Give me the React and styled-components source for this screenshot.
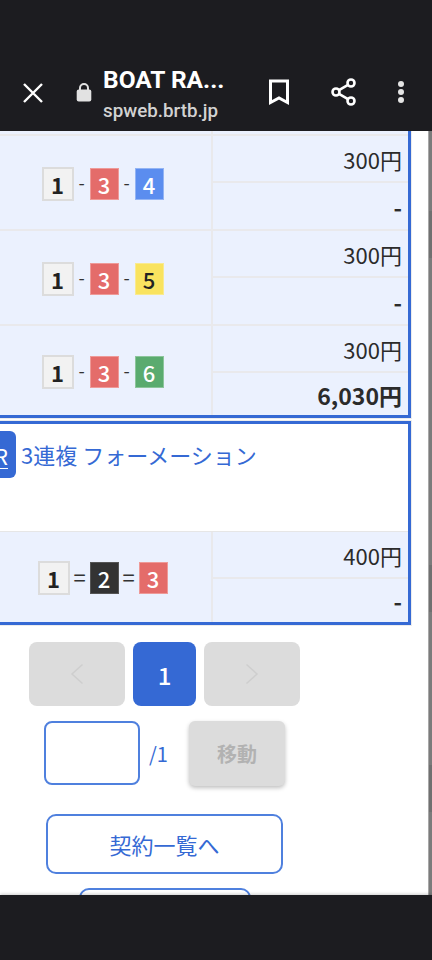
import React from 'react';
import styled, { createGlobalStyle } from 'styled-components';

const GlobalStyle = createGlobalStyle`
  html, body {
    margin: 0;
    padding: 0;
    background: #1c1c20;
  }
  * {
    box-sizing: border-box;
  }
`;

const boatColors = {
  1: { bg: '#f2f2f2', fg: '#222222', line: '#dcdcdc' },
  2: { bg: '#333333', fg: '#ffffff', line: '#555555' },
  3: { bg: '#e46c6a', fg: '#ffffff', line: '#ee9a98' },
  4: { bg: '#5b8def', fg: '#ffffff', line: '#93b4f4' },
  5: { bg: '#f9e35f', fg: '#222222', line: '#f9ea90' },
  6: { bg: '#5aab6f', fg: '#ffffff', line: '#8cc59b' },
};

const firstCard = [
  { boats: [1, 3, 4], sep: '-', stake: '300円', payout: '-', height: 95 },
  { boats: [1, 3, 5], sep: '-', stake: '300円', payout: '-', height: 95 },
  { boats: [1, 3, 6], sep: '-', stake: '300円', payout: '6,030円', height: 89 },
];

const Close = () => (
  <svg width="20" height="20" viewBox="0 0 20 20" stroke="#fff" strokeWidth="2.400">
    <path d="M1 1l18 18M19 1L1 19" />
  </svg>
);

const Bookmark = () => (
  <svg width="24" height="28" viewBox="0 0 24 28" fill="none" stroke="#fff" strokeWidth="3">
    <path d="M3.500 3h17v21.500L12 20l-8.500 4.500z" strokeLinejoin="miter" />
  </svg>
);

const Share = () => (
  <svg width="28" height="30" viewBox="0 0 28 30" fill="none" stroke="#fff" strokeWidth="2.600">
    <circle cx="21" cy="6" r="3.500" />
    <circle cx="6" cy="15" r="3.500" />
    <circle cx="21" cy="24" r="3.500" />
    <path d="M9 13.200l9-5.400M9 16.800l9 5.400" />
  </svg>
);

const Kebab = () => (
  <svg width="8" height="24" viewBox="0 0 8 24" fill="#e4e4e4">
    <circle cx="4" cy="4" r="3" />
    <circle cx="4" cy="12" r="3" />
    <circle cx="4" cy="20" r="3" />
  </svg>
);

const Lock = () => (
  <svg width="16" height="20" viewBox="0 0 16 20" fill="none">
    <path d="M4 9V6a4 4 0 0 1 8 0v3" stroke="#e2e2e2" strokeWidth="2" />
    <rect x="0.700" y="7.500" width="14.600" height="12" rx="2" fill="#e2e2e2" />
  </svg>
);

const Chevron = ({ dir }) => (
  <svg width="14" height="22" viewBox="0 0 14 22" fill="none" stroke="#cecece" strokeWidth="1.500">
    <path d={dir === 'left' ? 'M12.500 1.500L2 11l10.500 9.500' : 'M1.500 1.500L12 11 1.500 20.500'} />
  </svg>
);

const Boats = ({ boats, sep }) => (
  <BoatRow>
    {boats.map((n, i) => (
      <React.Fragment key={n}>
        {i > 0 && <Sep $wide={sep === '='}>{sep}</Sep>}
        <Boat $n={n}>{n}</Boat>
      </React.Fragment>
    ))}
  </BoatRow>
);

const BetRow = ({ boats, sep, stake, payout, height }) => (
  <Row $height={height}>
    <BoatCell>
      <Boats boats={boats} sep={sep} />
    </BoatCell>
    <AmountCol>
      <Stake>{stake}</Stake>
      <Payout>{payout}</Payout>
    </AmountCol>
  </Row>
);

const App = () => {
  return (
    <Page>
      <GlobalStyle />
      <TopBar>
        <CloseBtn>
          <Close />
        </CloseBtn>
        <LockWrap>
          <Lock />
        </LockWrap>
        <TitleBox>
          <SiteTitle>BOAT RA...</SiteTitle>
          <SiteUrl>spweb.brtb.jp</SiteUrl>
        </TitleBox>
        <TopIcons>
          <Bookmark />
          <Share />
          <Kebab />
        </TopIcons>
      </TopBar>
      <Viewport>
        <Main>
          <Card>
            <CutRow>
              <CutCell />
              <CutCell $right />
            </CutRow>
            {firstCard.map((row) => (
              <BetRow key={row.boats.join('')} {...row} />
            ))}
          </Card>
          <Card $second>
            <CardHead>
              <RBadge>
                <span>R</span>
              </RBadge>
              <BetName>3連複 フォーメーション</BetName>
            </CardHead>
            <BetRow boats={[1, 2, 3]} sep="=" stake="400円" payout="-" height={90} />
          </Card>
          <Controls>
            <Pager>
              <PageBtn $wide>
                <Chevron dir="left" />
              </PageBtn>
              <PageBtn $active>1</PageBtn>
              <PageBtn $wide>
                <Chevron dir="right" />
              </PageBtn>
            </Pager>
            <JumpRow>
              <JumpInput type="text" />
              <Total>/1</Total>
              <MoveBtn>移動</MoveBtn>
            </JumpRow>
            <LinkBtn>契約一覧へ</LinkBtn>
            <BackBtn />
          </Controls>
        </Main>
        <Rail />
      </Viewport>
      <BottomBar />
    </Page>
  );
};

const Page = styled.div`
  width: 432px;
  height: 960px;
  overflow: hidden;
  display: flex;
  flex-direction: column;
  font-family: 'Noto Sans CJK JP', 'Noto Sans', sans-serif;
  color: #222222;
`;

const TopBar = styled.header`
  height: 131px;
  flex: none;
  background: #1c1c20;
  display: flex;
  align-items: flex-start;
  padding-top: 66px;
`;

const CloseBtn = styled.div`
  width: 20px;
  height: 20px;
  margin: 17px 0 0 23px;
  line-height: 0;
`;

const LockWrap = styled.div`
  margin: 16px 0 0 33px;
  line-height: 0;
`;

const TitleBox = styled.div`
  margin: -1px 0 0 11px;
  width: 150px;
  font-family: Roboto, 'Noto Sans', sans-serif;
`;

const SiteTitle = styled.div`
  font-size: 24.500px;
  line-height: 30px;
  font-weight: 700;
  color: #ffffff;
  white-space: nowrap;
`;

const SiteUrl = styled.div`
  font-size: 18.800px;
  line-height: 24px;
  margin-top: 4px;
  font-weight: 500;
  color: #d2d2d2;
  white-space: nowrap;
`;

const TopIcons = styled.div`
  display: flex;
  align-items: center;
  height: 30px;
  margin: 11px 0 0 14px;
  gap: 39px;
`;

const Viewport = styled.div`
  flex: 1;
  min-height: 0;
  display: flex;
`;

const Main = styled.main`
  width: 428px;
  background: #ffffff;
  overflow: hidden;
`;

const Rail = styled.div`
  width: 4px;
  border-left: 1px solid #a8a8a8;
  background: linear-gradient(
    to bottom,
    #7b7b7b 0 80px,
    #707070 80px 127px,
    #7b7b7b 127px 434px,
    #707070 434px 481px,
    #7b7b7b 481px 634px,
    #707070 634px 681px,
    #7b7b7b 681px
  );
`;

const Card = styled.section`
  width: 414px;
  margin-left: -3px;
  margin-top: ${(p) => (p.$second ? '3px' : '0')};
  border: 3px solid #3569d4;
  border-top-width: ${(p) => (p.$second ? '3px' : '0')};
  box-shadow: 0 0 0 1px #ececec;
  background: #ebf1fe;
`;

const CutRow = styled.div`
  height: 5px;
  display: flex;
  border-bottom: 2px solid #e9e9ec;
`;

const CutCell = styled.div`
  width: ${(p) => (p.$right ? 'auto' : '211px')};
  flex: ${(p) => (p.$right ? '1' : 'none')};
  border-left: ${(p) => (p.$right ? '2px solid #e9e9ec' : 'none')};
`;

const Row = styled.div`
  height: ${(p) => p.$height}px;
  display: flex;
  border-bottom: 2px solid #e9e9ec;

  &:last-child {
    border-bottom: 0;
  }
`;

const BoatCell = styled.div`
  width: 211px;
  flex: none;
  padding: 2px 6px 0 0;
  display: flex;
  align-items: center;
  justify-content: center;
`;

const BoatRow = styled.div`
  display: flex;
  align-items: center;
`;

const Boat = styled.span`
  display: flex;
  align-items: center;
  justify-content: center;
  width: ${(p) => (p.$n === 1 ? '32px' : '29px')};
  height: ${(p) => (p.$n === 1 ? '34px' : '32px')};
  background: ${(p) => boatColors[p.$n].bg};
  color: ${(p) => boatColors[p.$n].fg};
  border: ${(p) => (p.$n === 1 ? '2px' : '1px')} solid ${(p) => boatColors[p.$n].line};
  font-size: 22px;
  font-weight: ${(p) => (p.$n === 1 ? 700 : 500)};
  line-height: 1;
`;

const Sep = styled.span`
  width: ${(p) => (p.$wide ? '20px' : '16px')};
  text-align: center;
  font-size: ${(p) => (p.$wide ? '22px' : '18px')};
  line-height: 1;
  color: #333333;
  margin-top: -4px;
`;

const AmountCol = styled.div`
  flex: 1;
  display: flex;
  flex-direction: column;
  border-left: 2px solid #e9e9ec;
`;

const Stake = styled.div`
  height: 47px;
  flex: none;
  display: flex;
  align-items: center;
  justify-content: flex-end;
  padding-right: 6px;
  border-bottom: 2px solid #e9e9ec;
  font-size: 22px;
  line-height: 1;
  color: #2b2b2b;
`;

const Payout = styled.div`
  flex: 1;
  display: flex;
  align-items: center;
  justify-content: flex-end;
  padding: 2px 6px 0 0;
  font-size: 23px;
  line-height: 1;
  font-weight: 700;
  color: #2b2b2b;
`;

const CardHead = styled.div`
  height: 108px;
  background: #ffffff;
  border-bottom: 1px solid #e6e6e6;
  display: flex;
  align-items: flex-start;
  padding-top: 7px;
`;

const RBadge = styled.div`
  width: 30px;
  height: 47px;
  margin-left: -14px;
  flex: none;
  border-radius: 6px;
  background: #3569d4;
  color: #ffffff;
  font-size: 22px;
  display: flex;
  align-items: center;
  justify-content: center;

  span {
    text-decoration: underline;
    text-underline-offset: 3px;
    text-decoration-thickness: 1px;
  }
`;

const BetName = styled.div`
  margin-left: 5px;
  font-size: 22px;
  line-height: 46px;
  color: #3569d4;
  white-space: nowrap;
`;

const Controls = styled.div`
  width: 329px;
  margin-top: 17px;
  display: flex;
  flex-direction: column;
  align-items: center;
`;

const Pager = styled.div`
  display: flex;
  gap: 8px;
`;

const PageBtn = styled.button`
  width: ${(p) => (p.$wide ? '96px' : '63px')};
  height: 64px;
  padding: 0;
  border: 0;
  border-radius: 8px;
  background: ${(p) => (p.$active ? '#3569d4' : '#dcdcdc')};
  color: #ffffff;
  font-family: inherit;
  font-size: 24px;
  font-weight: 500;
  display: flex;
  align-items: center;
  justify-content: center;
`;

const JumpRow = styled.div`
  margin-top: 15px;
  display: flex;
  align-items: flex-start;
`;

const JumpInput = styled.input`
  width: 96px;
  height: 64px;
  border: 2px solid #4f80de;
  border-radius: 8px;
  background: #ffffff;
  outline: none;
`;

const Total = styled.span`
  width: 49px;
  padding-left: 9px;
  font-size: 20px;
  line-height: 66px;
  color: #3569d4;
`;

const MoveBtn = styled.button`
  width: 96px;
  height: 65px;
  border: 0;
  border-radius: 6px;
  background: #dcdcdc;
  box-shadow: 0 2px 4px rgba(0, 0, 0, 0.25);
  color: #b2b2b2;
  font-family: inherit;
  font-size: 20px;
  font-weight: 700;
`;

const LinkBtn = styled.button`
  margin-top: 27px;
  width: 237px;
  height: 60px;
  border: 2px solid #4f80de;
  border-radius: 10px;
  background: #ffffff;
  color: #3569d4;
  font-family: inherit;
  font-size: 22px;
`;

const BackBtn = styled.button`
  margin-top: 14px;
  width: 172px;
  height: 60px;
  flex: none;
  border: 2px solid #4f80de;
  border-radius: 10px;
  background: #ffffff;
`;

const BottomBar = styled.footer`
  height: 65px;
  flex: none;
  background: #1c1c20;
  box-shadow: 0 -1px 3px rgba(0, 0, 0, 0.2);
  position: relative;
`;

export default App;
